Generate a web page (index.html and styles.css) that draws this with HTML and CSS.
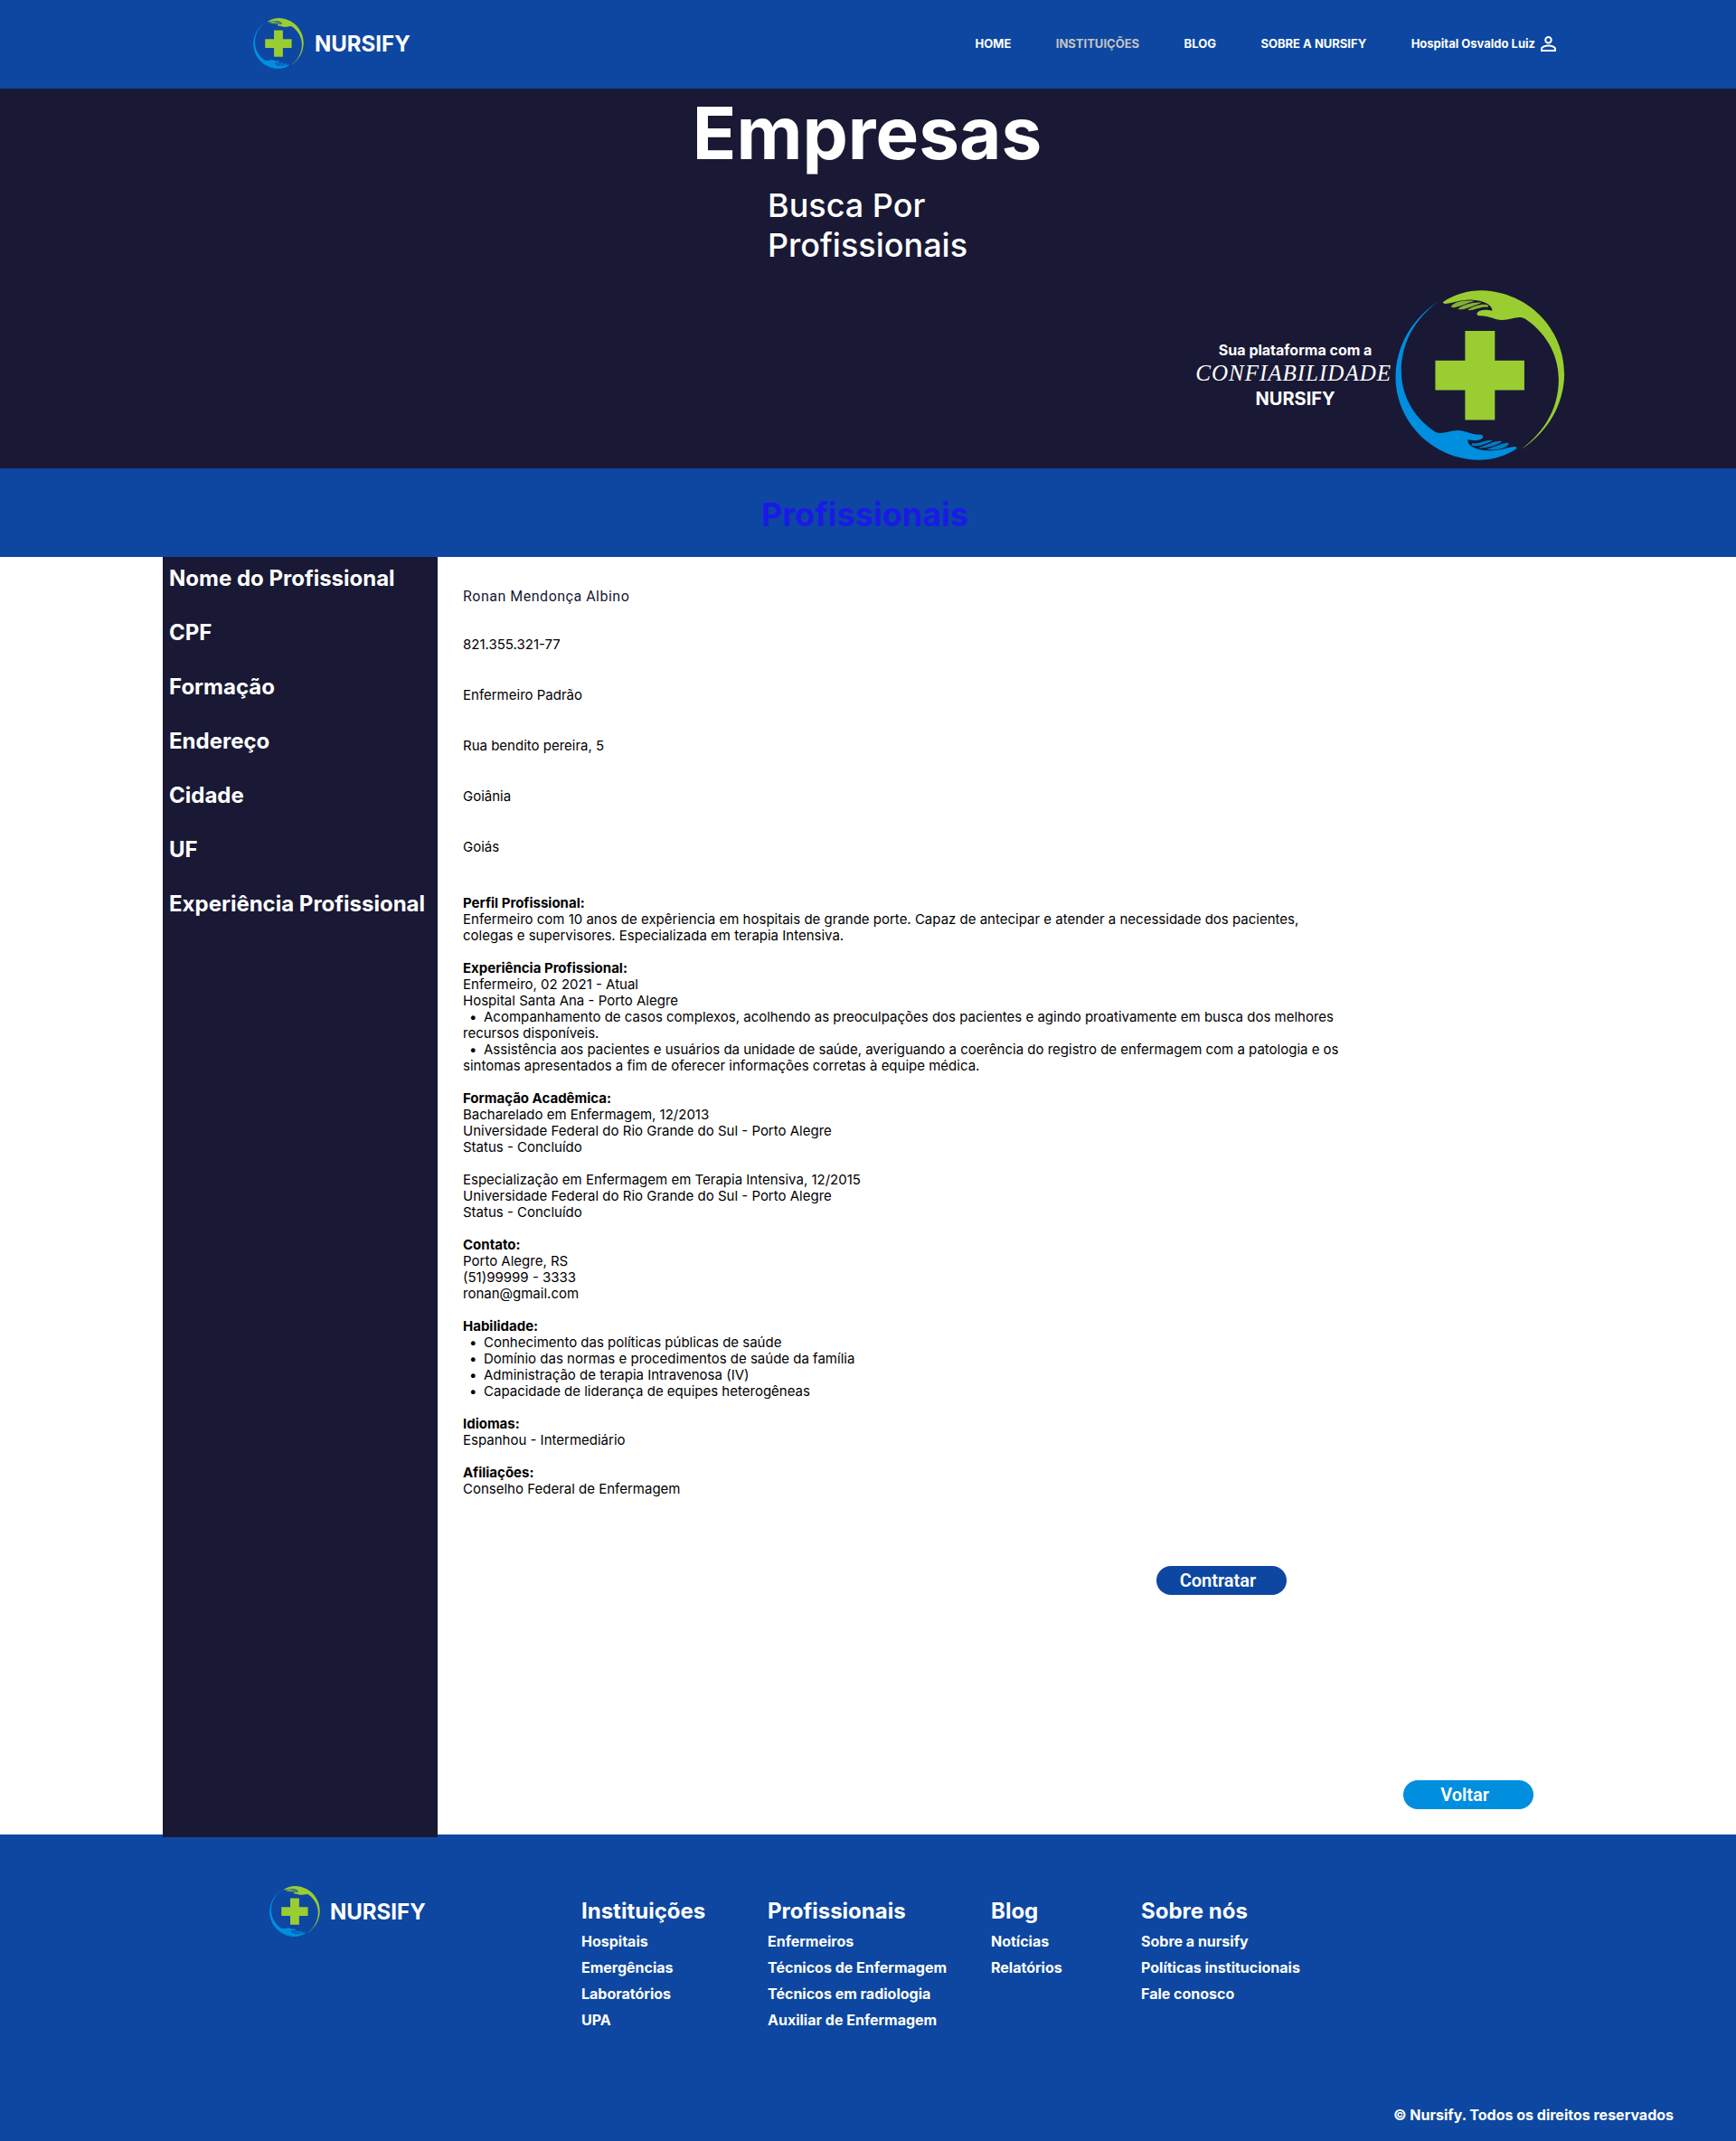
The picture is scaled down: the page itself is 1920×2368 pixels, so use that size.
FILE: index.html
```html
<!DOCTYPE html>
<html lang="pt-BR">
<head>
<meta charset="utf-8">
<title>Nursify - Profissionais</title>
<link rel="stylesheet" href="styles.css">
</head>
<body>
<svg class="sprite" aria-hidden="true">
  <symbol id="hand" viewBox="40 32 564 565">
    <path d="M198 72C238 44 285 32 330 33C480 38 603 160 602 312C600 410 550 500 460 560C545 495 583 415 583 328C583 260 552 180 470 126C445 115 425 131 395 131C370 131 350 115 318 117C306 113 312 103 322 100C335 95 350 98 362 100C365 80 330 66 300 64C262 60 230 76 203 77Z"/>
    <path class="fingers" d="M225 87C235 70 265 65 303 67C275 76 250 88 232 90ZM248 94C265 80 300 70 328 73C300 83 270 98 252 96ZM281 97C300 86 320 77 345 80C352 84 350 88 345 88C325 86 300 100 284 99Z"/>
  </symbol>
  <symbol id="logo" viewBox="40 32 564 565">
    <use class="hand-green" href="#hand" x="40" y="32" width="564" height="565"/>
    <g transform="rotate(180 321.5 314.5)"><use class="hand-blue" href="#hand" x="40" y="32" width="564" height="565"/></g>
    <path class="cross" d="M272 167H371V266H469V364H371V463H272V364H173V266H272Z"/>
  </symbol>
</svg>

<header class="topbar">
  <a class="brand"><svg class="brand-logo"><use href="#logo"/></svg><span>NURSIFY</span></a>
  <nav class="menu">
    <a>HOME</a><a class="active">INSTITUIÇÕES</a><a>BLOG</a><a>SOBRE A NURSIFY</a>
    <a class="user"><span>Hospital Osvaldo Luiz</span>
      <svg class="user-icon" viewBox="4 4 16 16"><path d="M12 5.9a2.1 2.1 0 1 1 0 4.2 2.1 2.1 0 0 1 0-4.2m0 9c2.97 0 6.1 1.46 6.1 2.1v1.1H5.9V17c0-.64 3.13-2.1 6.1-2.1M12 4C9.79 4 8 5.79 8 8s1.79 4 4 4 4-1.79 4-4-1.79-4-4-4m0 9c-2.67 0-8 1.34-8 4v3h16v-3c0-2.66-5.33-4-8-4"/></svg>
    </a>
  </nav>
</header>

<section class="hero">
  <h1>Empresas</h1>
  <p class="subtitle">Busca Por<br>Profissionais</p>
  <div class="pitch">
    <div class="pitch-text">
      <p class="pitch-lead">Sua plataforma com a</p>
      <p class="pitch-word">CONFIABILIDADE</p>
      <p class="pitch-name">NURSIFY</p>
    </div>
    <svg class="pitch-logo"><use href="#logo"/></svg>
  </div>
</section>

<section class="band"><h2>Profissionais</h2></section>

<main class="profile">
  <aside class="labels">
    <h3>Nome do Profissional</h3><h3>CPF</h3><h3>Formação</h3><h3>Endereço</h3><h3>Cidade</h3><h3>UF</h3><h3>Experiência Profissional</h3>
  </aside>
  <div class="details">
    <p class="name">Ronan Mendonça Albino</p>
    <div class="values"><p>821.355.321-77</p><p>Enfermeiro Padrão</p><p>Rua bendito pereira, 5</p><p>Goiânia</p><p>Goiás</p></div>
    <div class="resume">
      <section><h4>Perfil Profissional:</h4>
        <p>Enfermeiro com 10 anos de expêriencia em hospitais de grande porte. Capaz de antecipar e atender a necessidade dos pacientes,<br>colegas e supervisores. Especializada em terapia Intensiva.</p></section>
      <section><h4>Experiência Profissional:</h4>
        <p>Enfermeiro, 02 2021 - Atual</p>
        <p>Hospital Santa Ana - Porto Alegre</p>
        <p class="item">Acompanhamento de casos complexos, acolhendo as preoculpações dos pacientes e agindo proativamente em busca dos melhores<br>recursos disponíveis.</p>
        <p class="item">Assistência aos pacientes e usuários da unidade de saúde, averiguando a coerência do registro de enfermagem com a patologia e os<br>sintomas apresentados a fim de oferecer informações corretas à equipe médica.</p></section>
      <section><h4>Formação Acadêmica:</h4>
        <p>Bacharelado em Enfermagem, 12/2013</p>
        <p>Universidade Federal do Rio Grande do Sul - Porto Alegre</p>
        <p>Status - Concluído</p></section>
      <section>
        <p>Especialização em Enfermagem em Terapia Intensiva, 12/2015</p>
        <p>Universidade Federal do Rio Grande do Sul - Porto Alegre</p>
        <p>Status - Concluído</p></section>
      <section><h4>Contato:</h4>
        <p>Porto Alegre, RS</p><p>(51)99999 - 3333</p><p>ronan@gmail.com</p></section>
      <section><h4>Habilidade:</h4>
        <p class="item">Conhecimento das políticas públicas de saúde</p>
        <p class="item">Domínio das normas e procedimentos de saúde da família</p>
        <p class="item">Administração de terapia Intravenosa (IV)</p>
        <p class="item">Capacidade de liderança de equipes heterogêneas</p></section>
      <section><h4>Idiomas:</h4><p>Espanhou - Intermediário</p></section>
      <section><h4>Afiliações:</h4><p>Conselho Federal de Enfermagem</p></section>
    </div>
    <button class="btn btn-hire">Contratar</button>
    <button class="btn btn-back">Voltar</button>
  </div>
</main>

<footer class="footer">
  <div class="footer-main">
    <a class="brand"><svg class="brand-logo"><use href="#logo"/></svg><span>NURSIFY</span></a>
    <div class="links">
      <div><h5>Instituições</h5><a>Hospitais</a><a>Emergências</a><a>Laboratórios</a><a>UPA</a></div>
      <div><h5>Profissionais</h5><a>Enfermeiros</a><a>Técnicos de Enfermagem</a><a>Técnicos em radiologia</a><a>Auxiliar de Enfermagem</a></div>
      <div><h5>Blog</h5><a>Notícias</a><a>Relatórios</a></div>
      <div><h5>Sobre nós</h5><a>Sobre a nursify</a><a>Políticas institucionais</a><a>Fale conosco</a></div>
    </div>
  </div>
  <p class="copyright">© Nursify. Todos os direitos reservados</p>
</footer>
</body>
</html>
```
FILE: styles.css
```css
* { box-sizing: border-box; margin: 0; padding: 0; }
body { width: 1920px; background: #fff; color: #000; font-family: Inter, "Liberation Sans", sans-serif; }

.sprite { position: absolute; width: 0; height: 0; }
.hand-green, .cross { fill: #9acd32; }
.hand-blue { fill: #008ede; }
.fingers { opacity: .85; }

.topbar { display: flex; justify-content: space-between; align-items: center; height: 98px; padding: 0 199px 2px 280px; background: #0d47a1; color: #fff; }
.brand { display: flex; align-items: center; gap: 11px; font-size: 24px; font-weight: 650; line-height: 29px; }
.topbar .brand { gap: 12px; }
.brand-logo { display: block; width: 56px; height: 56px; }
.menu { display: flex; align-items: center; gap: 49.5px; font-size: 13px; font-weight: 700; line-height: 16px; }
.menu .active { color: #c4c4c4; }
.user { display: flex; align-items: center; gap: 6px; }
.user-icon { width: 17px; height: 17px; fill: #fff; }

.hero { height: 420px; background: #191935; color: #fff; }
.hero h1 { padding-right: 2px; font-size: 80px; font-weight: 700; line-height: 97px; text-align: center; }
.subtitle { margin: 10px 0 0 849px; font-size: 36px; font-weight: 500; line-height: 44px; }
.pitch { display: flex; justify-content: flex-end; align-items: center; gap: 4px; margin-top: 28px; padding-right: 189px; }
.pitch-logo { width: 188px; height: 188px; }
.pitch-text { text-align: center; }
.pitch-lead { padding-left: 4px; font-size: 16px; font-weight: 700; line-height: 20px; }
.pitch-word { font: italic 25px/32px "Liberation Serif", serif; letter-spacing: 1px; }
.pitch-name { padding-left: 4px; font-size: 20px; font-weight: 700; line-height: 24px; }

.band { height: 98px; padding: 29px 7px 0 0; background: #0d47a1; }
.band h2 { color: #1a1ae6; font-size: 36px; line-height: 44px; text-align: center; }

.profile { display: flex; height: 1413px; padding-left: 180px; }
.labels { display: flex; flex-direction: column; gap: 31px; width: 304px; height: 1416px; padding: 9px 7px; background: #191935; color: #fff; }
.labels h3 { font-size: 24px; line-height: 29px; white-space: nowrap; }
.details { flex: 1; padding-left: 28px; font-size: 15px; line-height: 18px; }
.name { margin-top: 32px; color: #191935; font: 16px/24px Roboto, sans-serif; letter-spacing: .5px; }
.values { display: flex; flex-direction: column; gap: 38px; margin-top: 32px; }
.resume { display: flex; flex-direction: column; gap: 18px; margin-top: 44px; }
.resume h4 { font-size: 15px; }
.resume p { white-space: nowrap; }
.item::before { content: "•"; display: inline-block; width: 16px; padding-left: 7px; }
.btn { display: block; width: 144px; height: 32px; border: 0; border-radius: 16px; padding-right: 8px; color: #fff; font: 600 20px/32px Roboto, sans-serif; }
.btn-hire { margin: 76px 0 0 767px; background: #0d47a1; }
.btn-back { margin: 205px 0 0 1040px; background: #008ede; }

.footer { height: 339px; background: #0d47a1; color: #fff; }
.footer-main { display: flex; align-items: flex-start; padding: 57px 0 0 298px; }
.footer .brand { width: 345px; }
.links { display: grid; grid-template-columns: 206px 247px 166px auto; padding-top: 13px; }
.links div { display: flex; flex-direction: column; gap: 9px; font-size: 16px; font-weight: 680; line-height: 20px; }
.links h5 { font-size: 24px; line-height: 29px; }
.copyright { margin: 85px 69px 0 0; font-size: 16px; font-weight: 680; line-height: 20px; text-align: right; }
```
